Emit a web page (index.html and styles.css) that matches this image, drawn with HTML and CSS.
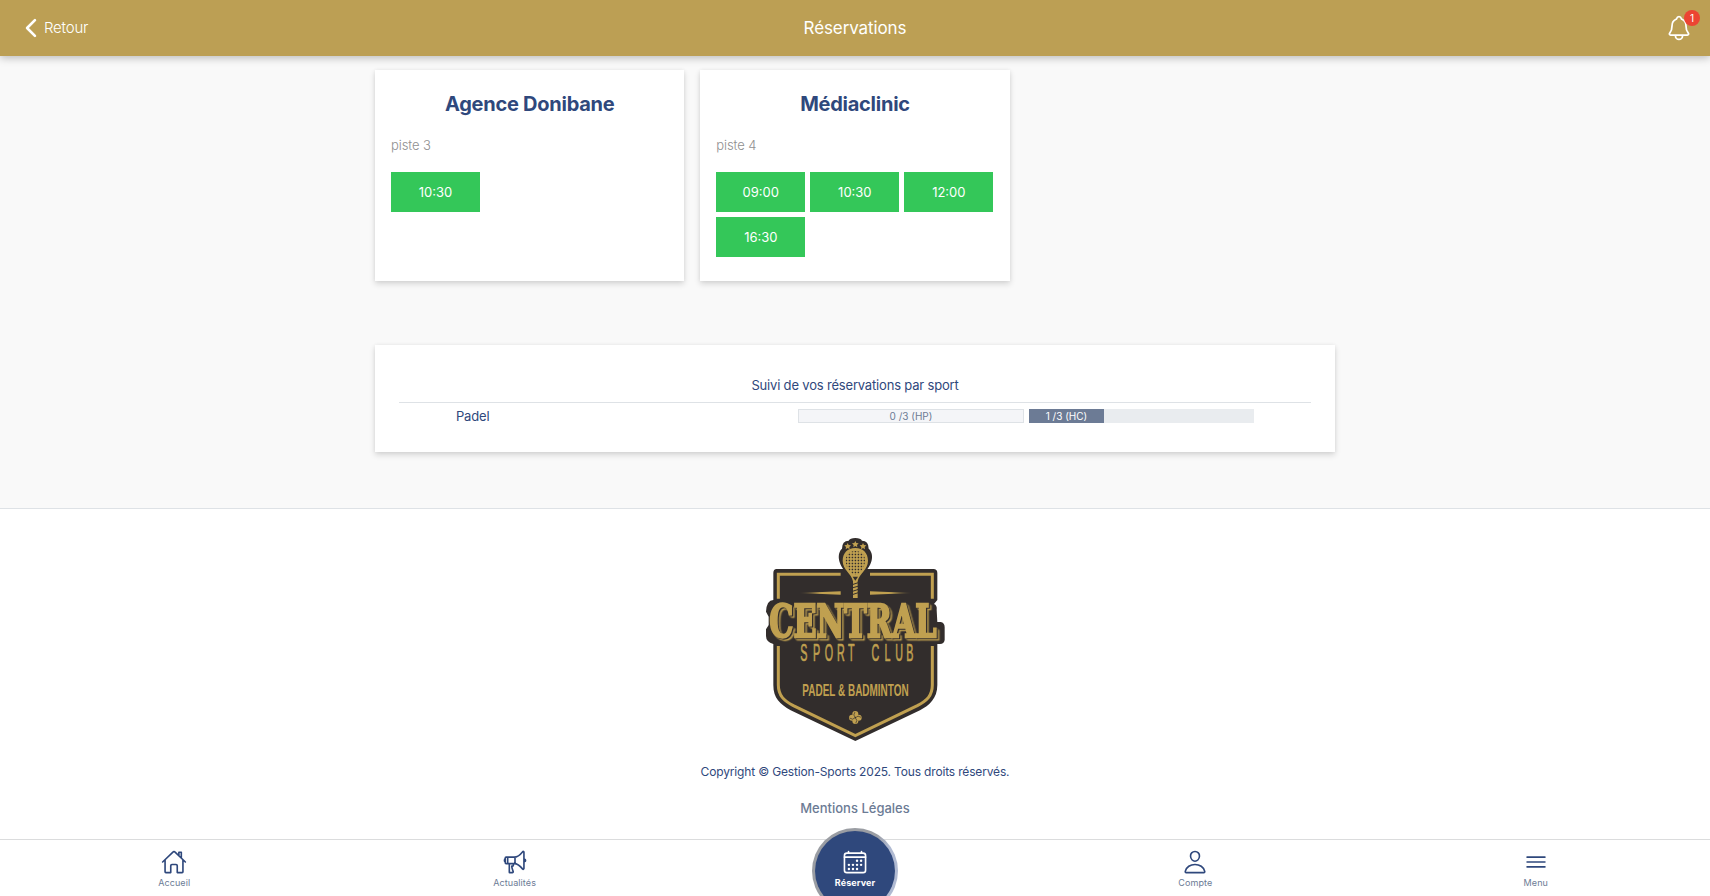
FILE: index.html
```html
<!DOCTYPE html>
<html lang="fr">
<head>
<meta charset="utf-8">
<title>Réservations</title>
<link rel="stylesheet" href="styles.css">
</head>
<body>
<header class="topbar">
  <a class="back"><svg class="icon-lg" viewBox="0 0 512 512"><path class="thick" d="M328 112L184 256l144 144"/></svg><span class="back-text">Retour</span></a>
  <h1 class="topbar-title">Réservations</h1>
  <div class="bell"><svg class="icon-lg" viewBox="0 0 512 512"><path d="M427.68 351.43C402 320 383.87 304 383.87 217.35 383.87 138 343.35 109.73 310 96c-4.43-1.82-8.6-6-9.95-10.55C294.2 65.54 277.8 48 256 48s-38.21 17.55-44 37.47c-1.35 4.6-5.52 8.71-9.95 10.53-33.39 13.75-73.87 41.92-73.87 121.35C128.13 304 110 320 84.32 351.43 73.68 364.45 83 384 101.61 384h308.88c18.51 0 27.77-19.61 17.19-32.57zM320 384v16a64 64 0 01-128 0v-16"/></svg><span class="badge">1</span></div>
</header>
<main class="content">
  <section class="courts">
    <article class="card court">
      <h2 class="court-name">Agence Donibane</h2>
      <p class="court-sub">piste 3</p>
      <div class="slots"><button class="slot">10:30</button></div>
    </article>
    <article class="card court">
      <h2 class="court-name">Médiaclinic</h2>
      <p class="court-sub">piste 4</p>
      <div class="slots"><button class="slot">09:00</button><button class="slot">10:30</button><button class="slot">12:00</button><button class="slot">16:30</button></div>
    </article>
  </section>
  <section class="card tracking">
    <h3 class="tracking-title">Suivi de vos réservations par sport</h3>
    <div class="tracking-row">
      <span class="sport">Padel</span>
      <div class="bars">
        <div class="bar bar-empty">0 /3 (HP)</div>
        <div class="bar bar-used"><div class="fill" style="width:33.33%">1 /3 (HC)</div></div>
      </div>
    </div>
  </section>
</main>
<footer class="footer">
  <svg class="logo" viewBox="0 0 690 720">
    <defs>
      <linearGradient id="fadeL"><stop offset="0" stop-color="#c0a050" stop-opacity="0"/><stop offset=".5" stop-color="#c0a050"/></linearGradient>
      <linearGradient id="fadeR"><stop offset=".5" stop-color="#c0a050"/><stop offset="1" stop-color="#c0a050" stop-opacity="0"/></linearGradient>
      <pattern id="mesh" width="9" height="9" patternUnits="userSpaceOnUse"><rect width="9" height="9" fill="#c0a050"/><rect x="2" y="2" width="4.5" height="4.5" rx="1" fill="#322d2c"/></pattern>
    </defs>
    <g class="dark">
      <path d="M110 147H580Q592 147 592 159V240L582 252Q592 256 590 270L592 306H602Q614 308 614 322V360Q612 372 600 372H592V495C592 535 568 556 540 571L346 663L152 571C120 552 100 535 100 495V372Q78 366 78 348V328L86 315V290L78 275Q80 240 100 240V159Q100 147 110 147Z"/>
      <path d="M314 152C286 118 298 92 306 86Q306 62 326 62Q330 54 346 54Q362 54 366 62Q386 62 386 86C394 92 408 118 378 152Z"/>
    </g>
    <g class="frame">
      <path d="M115 236V163H302M390 163H577V236"/>
      <path d="M115 378V495C115 528 133 542 160 557L346 647L532 557C560 542 577 528 577 495V378"/>
    </g>
    <path d="M175 219L302 214V224Z" fill="url(#fadeL)"/>
    <path d="M518 219L390 214V224Z" fill="url(#fadeR)"/>
    <path class="gold" d="M346 84C322 84 308 100 308 122C308 149 334 160 339 184V234H353V184C358 160 384 149 384 122C384 100 370 84 346 84Z"/>
    <path d="M346 93C326 93 317 105 317 121C317 143 330 155 340 164H352C362 155 375 143 375 121C375 105 366 93 346 93Z" fill="url(#mesh)"/>
    <path class="dark" d="M338 170H354L346 182ZM338 192L354 187V190L338 195ZM338 202L354 197V200L338 205ZM338 212L354 207V210L338 215ZM338 222L354 217V220L338 225Z"/>
    <path class="gold" d="M346 63l3 6 7 1-5 5 1 7-6-4-6 4 1-7-5-5 7-1zM323 69l3 6 7 1-5 5 1 7-6-4-6 4 1-7-5-5 7-1zM369 69l3 6 7 1-5 5 1 7-6-4-6 4 1-7-5-5 7-1z"/>
    <text class="club" x="88" y="352" textLength="502" lengthAdjust="spacingAndGlyphs">CENTRAL</text>
    <text class="sport-club" transform="scale(.46 1)" x="393 476 552 632 704 790 858 942 1012 1084" y="424">SPORT CLUB</text>
    <text class="padel" x="187" y="528" textLength="319" lengthAdjust="spacingAndGlyphs">PADEL &amp; BADMINTON</text>
    <g class="gold"><circle cx="346" cy="582" r="9"/><circle cx="346" cy="603" r="9"/><circle cx="336" cy="593" r="9"/><circle cx="356" cy="593" r="9"/></g>
    <path d="M346 593q-9-8-2-16M346 593q9 8 2 16M346 593q8-9 16-2M346 593q-8 9-16 2" fill="none" stroke="#322d2c" stroke-width="2"/>
  </svg>
  <p class="copyright">Copyright © Gestion-Sports 2025. Tous droits réservés.</p>
  <a class="legal">Mentions Légales</a>
</footer>
<nav class="tabs">
  <a class="tab"><svg class="icon" viewBox="0 0 512 512"><path d="M80 212v236a16 16 0 0016 16h96V328a24 24 0 0124-24h80a24 24 0 0124 24v136h96a16 16 0 0016-16V212M480 256L266.89 52c-5-5.28-16.69-5.34-21.78 0L32 256M400 179V64h-48v69"/></svg><span>Accueil</span></a>
  <a class="tab"><svg class="icon" viewBox="0 0 512 512"><path d="M407.94 52.22S321.3 160 240 160H80a16 16 0 00-16 16v96a16 16 0 0016 16h160c81.3 0 167.94 108.23 167.94 108.23 6.06 8 24.06 2.52 24.06-9.83V62c0-12.31-17-18.82-24.06-9.78zM64 256s-16-6-16-32 16-32 16-32M448 246s16-4.33 16-22-16-22-16-22M256 160v128M112 160v128M144 288v168a8 8 0 008 8h53a16 16 0 0015.29-20.73C211.91 416.39 192 386.08 192 336h16a16 16 0 0016-16v-16a16 16 0 00-16-16h-16"/></svg><span>Actualités</span></a>
  <a class="tab tab-main"><span class="disc"></span><svg class="icon" viewBox="0 0 512 512"><rect x="48" y="80" width="416" height="384" rx="48"/><path d="M128 48v32M384 48v32M464 160H48"/><g class="dots"><circle cx="296" cy="232" r="24"/><circle cx="376" cy="232" r="24"/><circle cx="296" cy="312" r="24"/><circle cx="376" cy="312" r="24"/><circle cx="136" cy="312" r="24"/><circle cx="216" cy="312" r="24"/><circle cx="136" cy="392" r="24"/><circle cx="216" cy="392" r="24"/><circle cx="296" cy="392" r="24"/></g></svg><span class="tab-text">Réserver</span></a>
  <a class="tab"><svg class="icon" viewBox="0 0 512 512"><path d="M344 144c-3.92 52.87-44 96-88 96s-84.15-43.12-88-96c-4-55 35-96 88-96s92 42 88 96zM256 304c-87 0-175.3 48-191.64 138.6C62.39 453.52 68.57 464 80 464h352c11.44 0 17.62-10.48 15.65-21.4C431.3 352 343 304 256 304z"/></svg><span>Compte</span></a>
  <a class="tab"><svg class="icon" viewBox="0 0 512 512"><path d="M80 160h352M80 256h352M80 352h352"/></svg><span>Menu</span></a>
</nav>
</body>
</html>
```
FILE: styles.css
```css
* { box-sizing: border-box; }
html, body { height: 100%; margin: 0; }
body {
  display: flex;
  flex-direction: column;
  overflow: hidden;
  background: #f9f9f9;
  color: #2f487c;
  font-family: Inter, "Liberation Sans", sans-serif;
}
h1, h2, h3, p { margin: 0; }
svg { display: block; fill: none; stroke: currentColor; stroke-width: 32; stroke-linecap: round; stroke-linejoin: round; }
.thick { stroke-width: 48; }
.icon { width: 26px; height: 26px; }
.icon-lg { width: 28px; height: 28px; }

.topbar {
  display: grid;
  grid-template-columns: 1fr auto 1fr;
  align-items: center;
  flex: none;
  height: 56px;
  padding: 0 17px;
  background: #bc9f54;
  color: #fff;
  box-shadow: 0 2px 8px rgba(0, 0, 0, .25);
}
.back { display: flex; align-items: center; font-size: 15px; letter-spacing: -.2px; }
.back-text { margin-left: -1px; padding-bottom: 1px; font-weight: 300; }
.topbar-title { font-size: 17px; font-weight: 400; letter-spacing: -.1px; }
.bell { position: relative; justify-self: end; }
.badge {
  position: absolute;
  top: -4px;
  right: -7px;
  width: 16px;
  height: 16px;
  border-radius: 50%;
  background: #ec4433;
  font-size: 10px;
  line-height: 16px;
  text-align: center;
}

.content { flex: none; width: 960px; height: 452px; margin: 0 auto; padding-top: 14px; }
.card { background: #fff; box-shadow: 0 3px 6px rgba(0, 0, 0, .14), 0 0 4px rgba(0, 0, 0, .06); }
.courts { display: grid; grid-template-columns: repeat(3, 1fr); gap: 16px; }
.court { height: 211px; padding: 22px 16px; }
.court-name { font-size: 20px; font-weight: 700; line-height: 24px; text-align: center; letter-spacing: -.25px; }
.court-sub { margin-top: 19px; font-size: 13px; font-weight: 300; line-height: 20px; letter-spacing: -.1px; color: #8f8f90; }
.slots { display: grid; grid-template-columns: repeat(3, 89px); gap: 5px; margin-top: 17px; }
.slot {
  height: 40px;
  padding: 0;
  border: 0;
  background: #34c759;
  color: #fff;
  font: 400 13px Inter, sans-serif;
}
.tracking { height: 107px; margin-top: 64px; padding: 30px 24px 0; }
.tracking-title { height: 28px; border-bottom: 1px solid #dee2e6; font-size: 13px; font-weight: 400; line-height: 20px; letter-spacing: -.18px; text-align: center; }
.tracking-row { display: flex; justify-content: space-between; padding: 6px 57px 0; }
.sport { font-size: 13px; line-height: 14px; letter-spacing: -.18px; }
.bars { display: grid; grid-template-columns: 226px 225px; gap: 5px; }
.bar { height: 14px; font-size: 10px; text-align: center; }
.bar-empty { border: 1px solid #dee2e6; background: #f4f5f8; color: #6c7b95; line-height: 13px; }
.bar-used { background: #e9ecef; color: #fff; }
.fill { height: 14px; background: #6c7b95; line-height: 14px; }

.footer {
  display: flex;
  flex: none;
  flex-direction: column;
  align-items: center;
  height: 331px;
  padding-top: 11px;
  border-top: 1px solid #dee2e6;
  background: #fff;
}
.logo { width: 230px; height: 240px; stroke: none; }
.dark { fill: #322d2c; }
.gold { fill: #c0a050; }
.frame { stroke: #c0a050; stroke-width: 9; stroke-linecap: butt; stroke-linejoin: miter; }
.club {
  font: 700 134px "DejaVu Serif", serif;
  fill: #c0a050;
  stroke: #c0a050;
  stroke-width: 7;
  stroke-linejoin: miter;
  filter: drop-shadow(4px 3px 0 #322d2c) drop-shadow(4px 4px 0 #c0a050);
}
.sport-club { font: 400 70px "Liberation Sans", sans-serif; fill: #c0a050; stroke: #c0a050; stroke-width: 2; }
.padel { font: 700 50px "Liberation Sans", sans-serif; fill: #c0a050; }
.copyright { margin-top: 3px; font-size: 12px; line-height: 18px; letter-spacing: -.165px; }
.legal { margin-top: 17px; color: #6c7b95; font-size: 13px; font-weight: 500; line-height: 20px; }

.tabs {
  display: grid;
  grid-template-columns: repeat(5, 1fr);
  flex: none;
  height: 57px;
  padding: 0 4px;
  border-top: 1px solid #dbdcdd;
  background: #fff;
}
.tab {
  position: relative;
  display: flex;
  flex-direction: column;
  align-items: center;
  padding-top: 9px;
  color: #6c7b95;
  font-size: 9px;
  line-height: 16px;
  letter-spacing: .1px;
}
.tab .icon { color: #2f487c; }
.tab-main { color: #fff; font-weight: 700; }
.tab-main .icon, .tab-text { position: relative; color: #fff; }
.disc {
  position: absolute;
  top: -12px;
  left: calc(50% - 43px);
  width: 86px;
  height: 86px;
  border: 3px solid transparent;
  border-radius: 50%;
  background: linear-gradient(#2f487c, #2f487c) padding-box, linear-gradient(100deg, #9a9da3 65%, #b0bad2 80%) border-box;
}
.dots { fill: currentColor; stroke: none; }
```
